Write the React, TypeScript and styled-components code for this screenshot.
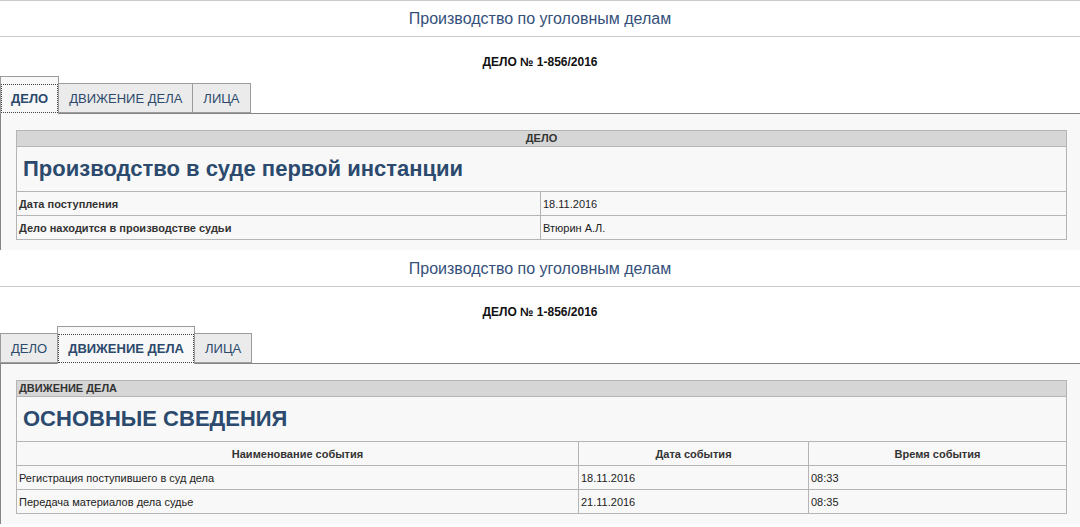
import React from "react";
import styled, { createGlobalStyle } from "styled-components";

const GlobalStyle = createGlobalStyle`
    body {
        margin: 0;
        background-color: #ffffff;
        font-family: "Liberation Sans", Arial, sans-serif;
    }
`;

const Screen = styled.section`
    display: flex;
    flex-direction: column;
`;

const Header = styled.div<{ $rule?: boolean }>`
    border-top: 1px solid ${(p) => (p.$rule ? "#cacaca" : "transparent")};
    border-bottom: 1px solid #cacaca;
    height: 35px;
    line-height: 35px;
    text-align: center;
    font-size: 16px;
    color: #34507a;
`;

const CaseNo = styled.div`
    padding-top: 18px;
    line-height: 14px;
    text-align: center;
    font-size: 12px;
    font-weight: bold;
    color: #111;
`;

const TabBar = styled.div`
    display: flex;
    align-items: flex-end;
    height: 37px;
    margin-top: 7px;
    border-bottom: 1px solid #858585;
`;

const Tab = styled.div<{ $active?: boolean }>`
    box-sizing: border-box;
    height: ${(p) => (p.$active ? "38px" : "30px")};
    padding-top: ${(p) => (p.$active ? "7px" : "0")};
    margin-bottom: ${(p) => (p.$active ? "-1px" : "0")};
    border: 1px solid #9c9c9c;
    border-bottom: ${(p) => (p.$active ? "none" : "1px solid #9c9c9c")};
    margin-left: -1px;
    background-color: ${(p) => (p.$active ? "#f8f8f8" : "#ebebeb")};

    &:first-child {
        margin-left: 0;
    }
`;

const TabLink = styled.a<{ $active?: boolean }>`
    display: block;
    padding: 0 10px;
    line-height: 29px;
    font-size: 13px;
    color: #2d4a6d;
    font-weight: ${(p) => (p.$active ? "bold" : "normal")};
    text-decoration: none;
    outline: ${(p) => (p.$active ? "1px dotted #444" : "none")};
    outline-offset: -1px;
`;

const Content = styled.div`
    background-color: #f8f8f8;
    border-left: 1px solid #858585;
    padding: 16px 14px 10px 15px;
`;

const Table = styled.table`
    width: 100%;
    border-collapse: collapse;
    table-layout: fixed;
    border: 1px solid #b5b5b5;
    font-size: 11px;
    color: #222;
`;

const Col = styled.col<{ $width: number }>`
    width: ${(p) => p.$width}px;
`;

const SectionHead = styled.td<{ $align: "left" | "center" }>`
    height: 15px;
    padding: 0 2px;
    line-height: 15px;
    background-color: #d6d6d6;
    border: 1px solid #b5b5b5;
    font-weight: bold;
    color: #333;
    text-align: ${(p) => p.$align};
`;

const Heading = styled.td`
    height: 44px;
    padding: 0 6px;
    border: 1px solid #b5b5b5;
    font-size: 22px;
    line-height: 26px;
    font-weight: bold;
    color: #2b4a6d;
`;

const Cell = styled.td<{ $bold?: boolean; $center?: boolean }>`
    height: 23px;
    padding: 0 2px;
    border: 1px solid #b5b5b5;
    font-weight: ${(p) => (p.$bold ? "bold" : "normal")};
    text-align: ${(p) => (p.$center ? "center" : "left")};
    color: ${(p) => (p.$bold ? "#333" : "#222")};
`;

const tabs = ["Дело", "Движение дела", "Лица"];

function CaseScreen({ active, rule, children }: { active: number; rule?: boolean; children: React.ReactNode }) {
    return (
        <Screen>
            <Header $rule={rule}>Производство по уголовным делам</Header>
            <CaseNo>ДЕЛО № 1-856/2016</CaseNo>
            <TabBar>
                {tabs.map((t, i) => (
                    <Tab key={t} $active={i === active}>
                        <TabLink href="#" $active={i === active}>
                            {t.toUpperCase()}
                        </TabLink>
                    </Tab>
                ))}
            </TabBar>
            <Content>{children}</Content>
        </Screen>
    );
}

const events = [
    { name: "Регистрация поступившего в суд дела", date: "18.11.2016", time: "08:33" },
    { name: "Передача материалов дела судье", date: "21.11.2016", time: "08:35" },
];

function App() {
    return (
        <>
            <GlobalStyle />
            <CaseScreen active={0} rule>
                <Table>
                    <colgroup>
                        <Col $width={524} />
                        <Col $width={526} />
                    </colgroup>
                    <tbody>
                        <tr>
                            <SectionHead colSpan={2} $align="center">
                                ДЕЛО
                            </SectionHead>
                        </tr>
                        <tr>
                            <Heading colSpan={2}>Производство в суде первой инстанции</Heading>
                        </tr>
                        <tr>
                            <Cell $bold>Дата поступления</Cell>
                            <Cell>18.11.2016</Cell>
                        </tr>
                        <tr>
                            <Cell $bold>Дело находится в производстве судьи</Cell>
                            <Cell>Втюрин А.Л.</Cell>
                        </tr>
                    </tbody>
                </Table>
            </CaseScreen>
            <CaseScreen active={1}>
                <Table>
                    <colgroup>
                        <Col $width={562} />
                        <Col $width={230} />
                        <Col $width={258} />
                    </colgroup>
                    <tbody>
                        <tr>
                            <SectionHead colSpan={3} $align="left">
                                ДВИЖЕНИЕ ДЕЛА
                            </SectionHead>
                        </tr>
                        <tr>
                            <Heading colSpan={3}>ОСНОВНЫЕ СВЕДЕНИЯ</Heading>
                        </tr>
                        <tr>
                            <Cell $bold $center>Наименование события</Cell>
                            <Cell $bold $center>Дата события</Cell>
                            <Cell $bold $center>Время события</Cell>
                        </tr>
                        {events.map((e) => (
                            <tr key={e.name}>
                                <Cell>{e.name}</Cell>
                                <Cell>{e.date}</Cell>
                                <Cell>{e.time}</Cell>
                            </tr>
                        ))}
                    </tbody>
                </Table>
            </CaseScreen>
        </>
    );
}

export default App;
